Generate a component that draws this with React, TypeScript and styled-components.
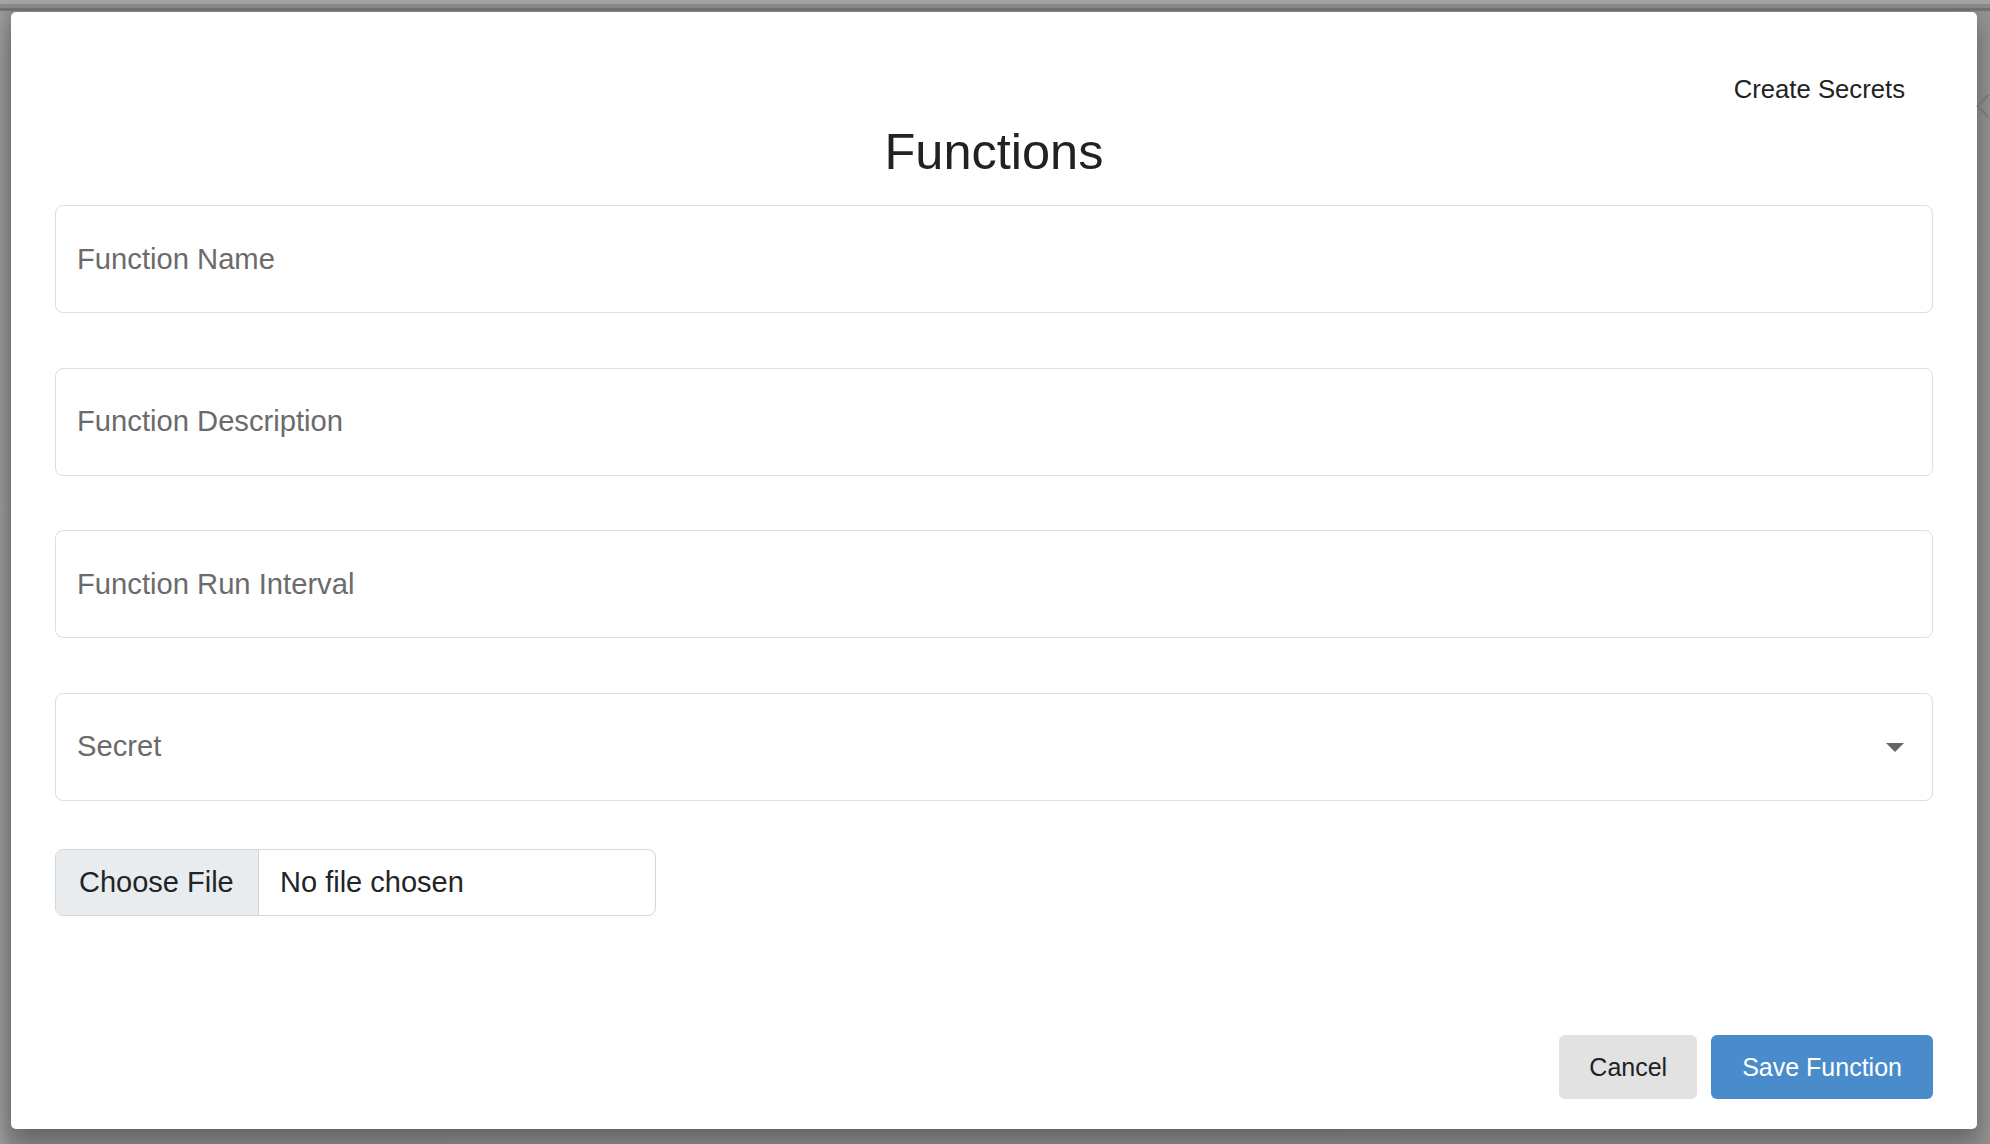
import React from "react";
import styled, { createGlobalStyle } from "styled-components";

const GlobalStyle = createGlobalStyle`
  html, body {
    margin: 0;
    padding: 0;
    width: 1990px;
    height: 1144px;
    overflow: hidden;
    background: #909090;
    font-family: "Liberation Sans", Arial, Helvetica, sans-serif;
  }
  * { box-sizing: border-box; }
`;

const Page = styled.div`
  position: relative;
  width: 1990px;
  height: 1144px;
  background: linear-gradient(90deg, #9a9a9a 0px, #8c8c8c 12px, #8e8e8e 1976px, #939393 1990px);
  overflow: hidden;
`;

const TopStrip = styled.div`
  height: 11px;
  background: #a3a3a3;
  border-bottom: 3px solid #727272;
  box-shadow: inset 0 -4px 0 #8a8a8a;
`;

const Backdrop = styled.div`
  padding: 1px 13px 0 11px;
`;

const Modal = styled.div`
  width: 1966px;
  height: 1117px;
  background: #ffffff;
  border-radius: 5px;
  padding: 62px 44px 30px;
  display: flex;
  flex-direction: column;
  box-shadow: 0 12px 24px rgba(0, 0, 0, 0.3);
`;

const Header = styled.div`
  display: flex;
  justify-content: flex-end;
  padding-right: 28px;
`;

const HeaderLink = styled.a`
  font-size: 25.7px;
  line-height: 30px;
  color: #222222;
  text-decoration: none;
  cursor: pointer;
`;

const Title = styled.h2`
  margin: 18px 0 23px;
  font-size: 50.5px;
  line-height: 60px;
  font-weight: 400;
  color: #222222;
  text-align: center;
`;

const Form = styled.div`
  display: flex;
  flex-direction: column;
  gap: 54.5px;
`;

const TextField = styled.input`
  display: block;
  width: 100%;
  height: 108px;
  border: 1px solid #dedede;
  border-radius: 8px;
  padding: 0 22px 0 21px;
  font-family: "Liberation Sans", Arial, Helvetica, sans-serif;
  font-size: 29.2px;
  color: #212529;
  background: #ffffff;
  outline: none;
  &::placeholder {
    color: #6b6b6b;
  }
`;

const SelectField = styled.div`
  display: flex;
  align-items: center;
  justify-content: space-between;
  height: 108px;
  border: 1px solid #dedede;
  border-radius: 8px;
  padding: 0 28px 0 21px;
  font-size: 29.2px;
  color: #6b6b6b;
  background: #ffffff;
`;

const Caret = styled.svg`
  width: 18px;
  height: 9px;
  margin-top: 2px;
  display: block;
`;

const FileField = styled.div`
  display: flex;
  margin-top: 48.5px;
  width: 601px;
  height: 67px;
  border: 1px solid #d6d6d6;
  border-radius: 8px;
  overflow: hidden;
  font-size: 29px;
  color: #212529;
`;

const FileButton = styled.div`
  display: flex;
  align-items: center;
  width: 203px;
  padding-left: 23px;
  background: #e9ecef;
  border-right: 1px solid #d6d6d6;
`;

const FileName = styled.div`
  display: flex;
  align-items: center;
  padding-left: 21px;
`;

const Footer = styled.div`
  margin-top: auto;
  display: flex;
  justify-content: flex-end;
  gap: 14px;
`;

const Button = styled.button<{ $primary?: boolean }>`
  height: 64px;
  padding: 0 ${(p) => (p.$primary ? "31px" : "30px")};
  border: none;
  border-radius: 6px;
  font-family: "Liberation Sans", Arial, Helvetica, sans-serif;
  font-size: 25px;
  background: ${(p) => (p.$primary ? "#4a8ccb" : "#e2e2e2")};
  color: ${(p) => (p.$primary ? "#ffffff" : "#222222")};
  cursor: pointer;
`;

const EdgeChevron = styled.svg`
  position: absolute;
  right: 0;
  top: 92px;
  width: 14px;
  height: 28px;
`;

export default function App() {
  return (
    <>
      <GlobalStyle />
      <Page>
        <TopStrip />
        <Backdrop>
          <Modal>
            <Header>
              <HeaderLink>Create Secrets</HeaderLink>
            </Header>
            <Title>Functions</Title>
            <Form>
              <TextField placeholder="Function Name" />
              <TextField placeholder="Function Description" />
              <TextField placeholder="Function Run Interval" />
              <SelectField>
                <span>Secret</span>
                <Caret viewBox="0 0 18 9">
                  <path d="M0 0 H18 L9 9 Z" fill="#666666" />
                </Caret>
              </SelectField>
            </Form>
            <FileField>
              <FileButton>Choose File</FileButton>
              <FileName>No file chosen</FileName>
            </FileField>
            <Footer>
              <Button>Cancel</Button>
              <Button $primary>Save Function</Button>
            </Footer>
          </Modal>
        </Backdrop>
        <EdgeChevron viewBox="0 0 14 28">
          <path d="M12 3 L2 14 L12 25" fill="none" stroke="#767676" strokeWidth="2.5" />
        </EdgeChevron>
      </Page>
    </>
  );
}
